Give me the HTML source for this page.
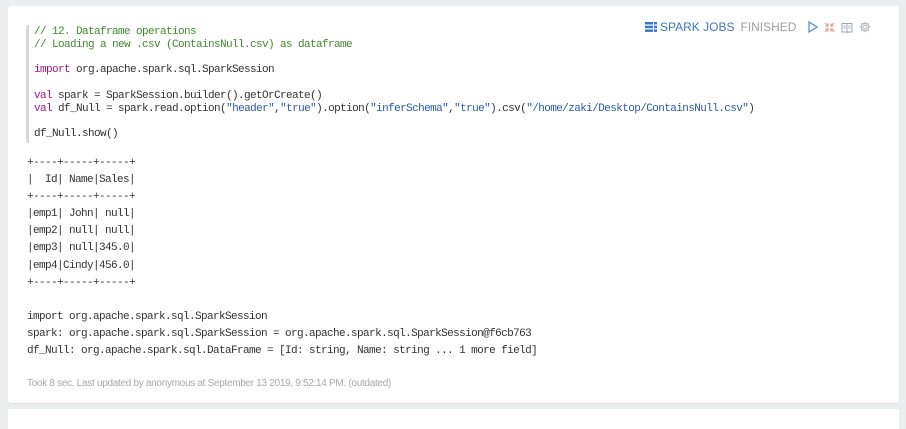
<!DOCTYPE html>
<html><head><style>
body{margin:0;width:906px;height:412px;background:#ebeeef;overflow:hidden;position:relative;font-family:"Liberation Sans",sans-serif}
.card{position:absolute;left:8px;top:6px;width:891px;height:397px;background:#fff;border-radius:3px;box-shadow:0 1px 1px rgba(0,0,0,.08)}
.card2{position:absolute;left:8px;top:409px;width:891px;height:20px;background:#fff}
.bar{position:absolute;left:26px;top:25px;width:3px;height:118px;background:#d9d9d9}
.code{position:absolute;left:34px;top:26px;font-family:"Liberation Mono",monospace;font-size:11px;letter-spacing:-0.6px;line-height:12.75px;white-space:pre;color:#333}
.c{color:#3f8a2f}.k{color:#a5118a}.s{color:#2b58b5}
.out{position:absolute;left:27px;top:155px;font-family:"Liberation Mono",monospace;font-size:11px;letter-spacing:-0.6px;line-height:17.1px;white-space:pre;color:#333}
.foot{position:absolute;left:27px;top:378px;font-size:10px;color:#a8a8a8;letter-spacing:-0.3px}
.hdr{position:absolute;left:645px;top:20px;font-size:12px;color:#3b78c0;display:flex;align-items:center;white-space:nowrap}
.fin{color:#a0a0a0;margin-left:6px}
</style></head><body>
<div class="card"></div><div class="card2"></div>
<div class="bar"></div>
<div class="code"><span class="c">// 12. Dataframe operations
// Loading a new .csv (ContainsNull.csv) as dataframe</span>

<span class="k">import</span> org.apache.spark.sql.SparkSession

<span class="k">val</span> spark = SparkSession.builder().getOrCreate()
<span class="k">val</span> df_Null = spark.read.option(<span class="s">"header"</span>,<span class="s">"true"</span>).option(<span class="s">"inferSchema"</span>,<span class="s">"true"</span>).csv(<span class="s">"/home/zaki/Desktop/ContainsNull.csv"</span>)

df_Null.show()</div>
<div class="out">+----+-----+-----+
|  Id| Name|Sales|
+----+-----+-----+
|emp1| John| null|
|emp2| null| null|
|emp3| null|345.0|
|emp4|Cindy|456.0|
+----+-----+-----+

import org.apache.spark.sql.SparkSession
spark: org.apache.spark.sql.SparkSession = org.apache.spark.sql.SparkSession@f6cb763
df_Null: org.apache.spark.sql.DataFrame = [Id: string, Name: string ... 1 more field]</div>
<div class="foot">Took 8 sec. Last updated by anonymous at September 13 2019, 9:52:14 PM. (outdated)</div>
<div class="hdr">
<svg width="12" height="10" viewBox="0 0 12 10"><rect x="0" y="0" width="12" height="2.5" fill="#3b78c0"/><rect x="0" y="3.7" width="12" height="2.5" fill="#3b78c0"/><rect x="0" y="7.4" width="12" height="2.5" fill="#3b78c0"/><rect x="8" y="0" width="1" height="10" fill="#fff"/></svg>
<span style="margin-left:3px">SPARK JOBS</span><span class="fin">FINISHED</span>
<svg style="margin-left:12px" width="10" height="12" viewBox="0 0 10 12"><path d="M1 1 L9 6 L1 11 Z" fill="none" stroke="#4a8ad0" stroke-width="1.2"/></svg>
<svg style="margin-left:6px" width="11" height="11" viewBox="0 0 11 11" stroke="#e0a080" stroke-width="1.2" fill="none"><path d="M1 1L4 4M4 1.5V4H1.5M10 1L7 4M7 1.5V4H9.5M1 10L4 7M4 9.5V7H1.5M10 10L7 7M7 9.5V7H9.5"/></svg>
<svg style="margin-left:6px" width="12" height="11" viewBox="0 0 12 11" stroke="#9aa8b5" fill="none"><path d="M1 1.5H5.5L6 2L6.5 1.5H11V10H6.5L6 10.5L5.5 10H1Z M6 2V10 M2.5 4H4.5M2.5 6H4.5M7.5 4H9.5M7.5 6H9.5"/></svg>
<svg style="margin-left:6px" width="12" height="12" viewBox="0 0 12 12" stroke="#a8b0b8" fill="none"><circle cx="6" cy="6" r="2"/><path d="M6 0.8V2.3M6 9.7V11.2M0.8 6H2.3M9.7 6H11.2M2.3 2.3L3.4 3.4M8.6 8.6L9.7 9.7M2.3 9.7L3.4 8.6M8.6 3.4L9.7 2.3"/><circle cx="6" cy="6" r="3.8"/></svg>
</div>
</body></html>
